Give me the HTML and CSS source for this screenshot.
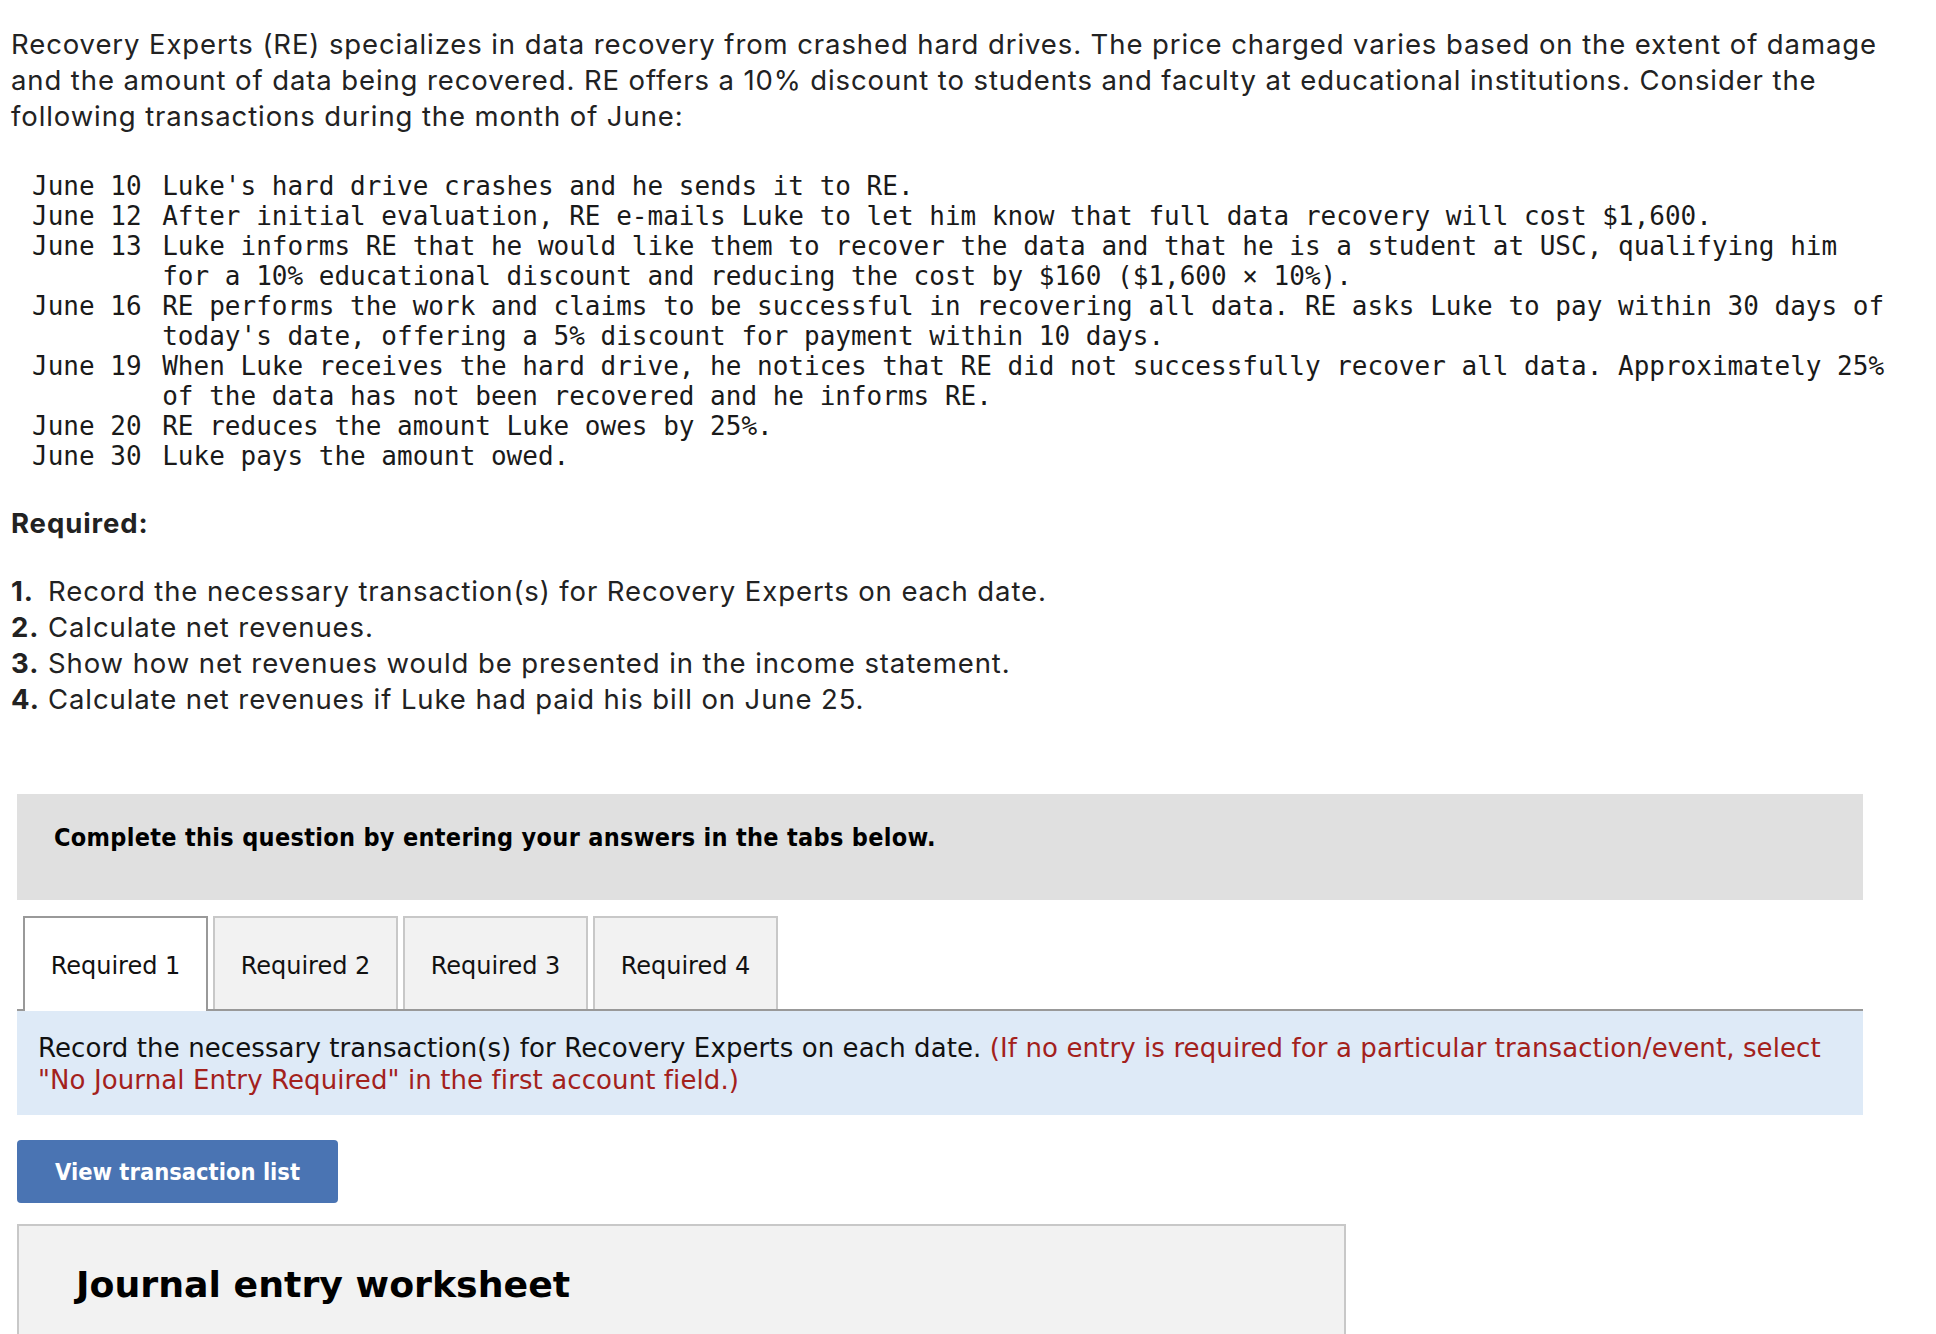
FILE: index.html
```html
<!DOCTYPE html>
<html lang="en">
<head>
<meta charset="utf-8">
<title>Recovery Experts</title>
<link rel="stylesheet" href="styles.css">
</head>
<body>
<div class="page">
  <p class="intro">Recovery Experts (RE) specializes in data recovery from crashed hard drives. The price charged varies based on the extent of damage<br>and the amount of data being recovered. RE offers a 10% discount to students and faculty at educational institutions. Consider the<br>following transactions during the month of June:</p>

  <div class="events">
    <div class="event"><span class="date">June 10</span><span class="desc">Luke's hard drive crashes and he sends it to RE.</span></div>
    <div class="event"><span class="date">June 12</span><span class="desc">After initial evaluation, RE e-mails Luke to let him know that full data recovery will cost $1,600.</span></div>
    <div class="event"><span class="date">June 13</span><span class="desc">Luke informs RE that he would like them to recover the data and that he is a student at USC, qualifying him<br>for a 10% educational discount and reducing the cost by $160 ($1,600 × 10%).</span></div>
    <div class="event"><span class="date">June 16</span><span class="desc">RE performs the work and claims to be successful in recovering all data. RE asks Luke to pay within 30 days of<br>today's date, offering a 5% discount for payment within 10 days.</span></div>
    <div class="event"><span class="date">June 19</span><span class="desc">When Luke receives the hard drive, he notices that RE did not successfully recover all data. Approximately 25%<br>of the data has not been recovered and he informs RE.</span></div>
    <div class="event"><span class="date">June 20</span><span class="desc">RE reduces the amount Luke owes by 25%.</span></div>
    <div class="event"><span class="date">June 30</span><span class="desc">Luke pays the amount owed.</span></div>
  </div>

  <h3 class="req-title">Required:</h3>
  <ol class="req-list">
    <li><span class="num">1.</span><span>Record the necessary transaction(s) for Recovery Experts on each date.</span></li>
    <li><span class="num">2.</span><span>Calculate net revenues.</span></li>
    <li><span class="num">3.</span><span>Show how net revenues would be presented in the income statement.</span></li>
    <li><span class="num">4.</span><span>Calculate net revenues if Luke had paid his bill on June 25.</span></li>
  </ol>

  <div class="work">
    <div class="instruction-bar">Complete this question by entering your answers in the tabs below.</div>

    <div class="tabs">
      <div class="tab active">Required 1</div>
      <div class="tab">Required 2</div>
      <div class="tab">Required 3</div>
      <div class="tab">Required 4</div>
    </div>

    <div class="tab-panel">Record the necessary transaction(s) for Recovery Experts on each date. <span class="note">(If no entry is required for a particular transaction/event, select<br>"No Journal Entry Required" in the first account field.)</span></div>

    <button class="btn" type="button">View transaction list</button>

    <div class="worksheet">
      <h2 class="ws-title">Journal entry worksheet</h2>
    </div>
  </div>
</div>
</body>
</html>
```

FILE: styles.css
```css
html, body {
  margin: 0;
  padding: 0;
  background: #ffffff;
}

.page {
  padding-left: 11px;
  width: 1925px;
  box-sizing: border-box;
}

.intro {
  margin: 26px 0 0 0;
  font-family: Inter, "Open Sans", sans-serif;
  font-size: 27.5px;
  letter-spacing: 0.9px;
  line-height: 36px;
  color: #222222;
  white-space: nowrap;
}

.events {
  margin: 37px 0 0 21px;
  font-family: "DejaVu Sans Mono", "Liberation Mono", monospace;
  font-size: 26px;
  line-height: 30px;
  color: #1a1a1a;
  white-space: nowrap;
}

.event {
  display: flex;
}

.date {
  flex: none;
  width: calc(8ch + 5px);
}

.req-title {
  margin: 34px 0 0 0;
  font-family: Inter, "Open Sans", sans-serif;
  font-size: 27.5px;
  letter-spacing: 0.9px;
  line-height: 36px;
  font-weight: 700;
  color: #222222;
}

.req-list {
  list-style: none;
  margin: 32px 0 0 0;
  padding: 0;
  font-family: Inter, "Open Sans", sans-serif;
  font-size: 27.5px;
  letter-spacing: 0.9px;
  line-height: 36px;
  color: #222222;
}

.req-list li {
  display: grid;
  grid-template-columns: 20px 1fr;
  column-gap: 17px;
}

.num {
  font-weight: 700;
  text-align: right;
  letter-spacing: 1px;
  margin-right: -1px;
}

.work {
  margin: 77px 0 0 6px;
  width: 1846px;
}

.instruction-bar {
  box-sizing: border-box;
  height: 106px;
  padding: 29px 0 0 37px;
  background: #e0e0e0;
  font-family: "DejaVu Sans Condensed", "DejaVu Sans", sans-serif;
  font-stretch: condensed;
  font-weight: 700;
  font-size: 25px;
  letter-spacing: 0.3px;
  line-height: 30px;
  color: #000000;
}

.tabs {
  display: flex;
  gap: 5px;
  margin-top: 16px;
  padding-left: 6px;
  border-bottom: 2px solid #999999;
}

.tab {
  box-sizing: border-box;
  width: 185px;
  height: 93px;
  display: flex;
  align-items: center;
  justify-content: center;
  padding-top: 4px;
  background: #f2f2f2;
  border: 2px solid #c8c8c8;
  border-bottom: none;
  font-family: "DejaVu Sans", Verdana, sans-serif;
  font-size: 24px;
  color: #111111;
}

.tab.active {
  background: #ffffff;
  border-color: #999999;
  height: 95px;
  margin-bottom: -2px;
  padding-top: 2px;
}

.tab-panel {
  padding: 21px 20px 19px 21px;
  background: #deeaf7;
  font-family: "DejaVu Sans", Verdana, sans-serif;
  font-size: 26px;
  letter-spacing: 0.1px;
  line-height: 32px;
  color: #111111;
  white-space: nowrap;
}

.note {
  color: #a3211c;
}

.btn {
  display: block;
  margin-top: 25px;
  width: 321px;
  height: 63px;
  border: none;
  border-radius: 4px;
  background: #4a74b3;
  color: #ffffff;
  font-family: "DejaVu Sans Condensed", "DejaVu Sans", sans-serif;
  font-stretch: condensed;
  font-weight: 700;
  font-size: 23.5px;
  padding: 0;
}

.worksheet {
  margin-top: 21px;
  width: 1329px;
  min-height: 300px;
  box-sizing: border-box;
  background: #f2f2f2;
  border: 2px solid #c8c8c8;
  padding: 37px 0 0 57px;
}

.ws-title {
  margin: 0;
  font-family: "DejaVu Sans", Verdana, sans-serif;
  font-weight: 700;
  font-size: 36.3px;
  line-height: 44px;
  color: #000000;
}
```
